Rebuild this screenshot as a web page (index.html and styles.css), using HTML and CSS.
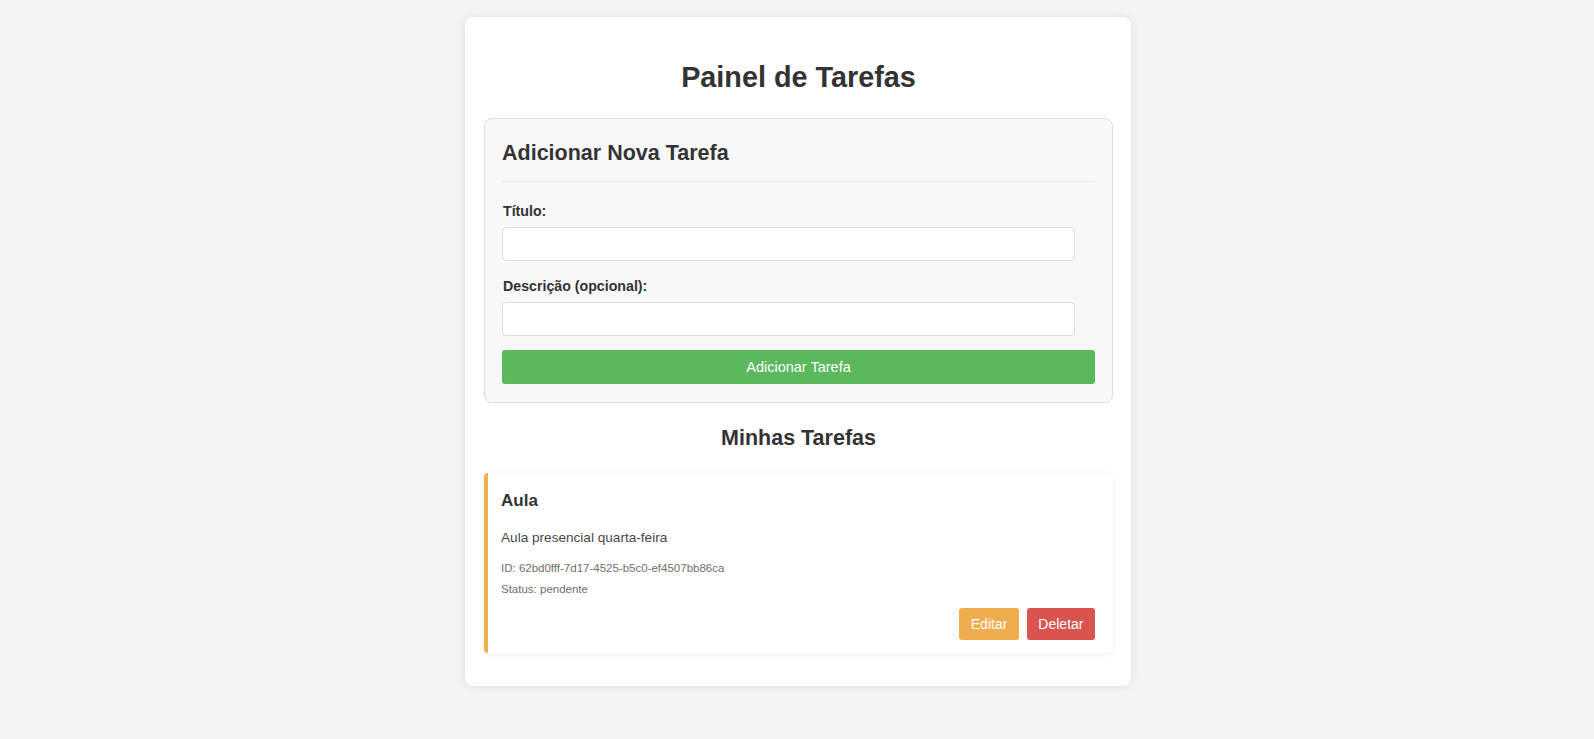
FILE: index.html
```html
<!DOCTYPE html>
<html lang="pt">
<head>
<meta charset="utf-8">
<title>Painel de Tarefas</title>
<link rel="stylesheet" href="styles.css">
</head>
<body>
<div class="container">
  <h1 class="page-title">Painel de Tarefas</h1>
  <form class="task-form">
    <h2 class="form-title">Adicionar Nova Tarefa</h2>
    <label class="field-label" for="titulo">Título:</label>
    <input class="field-input" id="titulo" type="text">
    <label class="field-label" for="descricao">Descrição (opcional):</label>
    <input class="field-input last" id="descricao" type="text">
    <button class="btn-add" type="button">Adicionar Tarefa</button>
  </form>
  <h2 class="list-title">Minhas Tarefas</h2>
  <div class="task-card pending">
    <h3 class="task-title">Aula</h3>
    <p class="task-desc">Aula presencial quarta-feira</p>
    <p class="task-meta">ID: 62bd0fff-7d17-4525-b5c0-ef4507bb86ca</p>
    <p class="task-meta status">Status: pendente</p>
    <div class="task-actions">
      <button class="btn btn-edit" type="button">Editar</button>
      <button class="btn btn-delete" type="button">Deletar</button>
    </div>
  </div>
</div>
</body>
</html>
```
FILE: styles.css
```css
* { box-sizing: border-box; }
html, body { margin: 0; }
body {
  background: #f4f4f4;
  font-family: "Liberation Sans", Arial, sans-serif;
  color: #333;
  padding: 17px 0 40px 2px;
}
.container {
  width: 666px;
  margin: 0 auto;
  background: #fff;
  border-radius: 8px;
  box-shadow: 0 0 10px rgba(0, 0, 0, 0.1);
  padding: 19px 18px 19px 19px;
}
.page-title {
  margin: 24px 0 24px;
  font-size: 28.8px;
  line-height: 34px;
  text-align: center;
  color: #333;
}
.task-form {
  background: #f8f8f8;
  border: 1px solid #ddd;
  border-radius: 8px;
  padding: 17px 17px 18px;
  margin: 0;
}
.form-title {
  margin: 5px 0 21px;
  font-size: 21.5px;
  line-height: 25px;
  padding-bottom: 15px;
  border-bottom: 1px solid #e8e8e8;
  color: #333;
}
.field-label {
  display: block;
  font-size: 14.2px;
  font-weight: bold;
  line-height: 17px;
  margin-bottom: 7px;
  padding-left: 1px;
  color: #333;
}
.field-input {
  display: block;
  width: calc(100% - 20px);
  height: 34px;
  border: 1px solid #ddd;
  border-radius: 4px;
  background: #fff;
  padding: 8px;
  font-size: 14px;
  font-family: inherit;
  margin: 0 0 17px;
}
.field-input.last { margin-bottom: 14px; }
.btn-add {
  display: block;
  width: 100%;
  height: 34px;
  border: none;
  border-radius: 3px;
  background: #5cb85c;
  color: #fff;
  font-family: inherit;
  font-size: 14.5px;
}
.list-title {
  margin: 23px 0 22px;
  font-size: 21.5px;
  line-height: 25px;
  text-align: center;
  color: #333;
}
.task-card {
  background: #fff;
  border-left: 4px solid #f0ad4e;
  border-radius: 4px;
  box-shadow: 0 1px 4px rgba(0, 0, 0, 0.08);
  padding: 18px 18px 13px 13px;
  margin-bottom: 14px;
}
.task-title {
  margin: 0 0 18px;
  font-size: 17px;
  line-height: 20px;
  color: #333;
}
.task-desc {
  margin: 0 0 15px;
  font-size: 13.6px;
  line-height: 17px;
  color: #484848;
}
.task-meta {
  margin: 0 0 6px;
  font-size: 11.5px;
  line-height: 15px;
  color: #6f6f6f;
}
.task-meta.status { margin-bottom: 11px; }
.task-actions {
  display: flex;
  justify-content: flex-end;
  gap: 8px;
}
.btn {
  border: none;
  border-radius: 3px;
  color: #fff;
  font-family: inherit;
  font-size: 14px;
  line-height: 17px;
  padding: 7px 11.5px;
  height: 32px;
}
.btn-edit { background: #f0ad4e; }
.btn-delete { background: #d9534f; }
```
